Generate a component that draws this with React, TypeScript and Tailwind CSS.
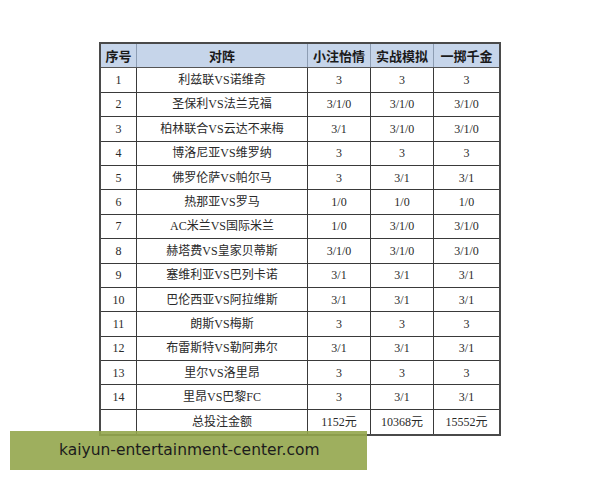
const rows: string[][] = [
  ["1", "利兹联VS诺维奇", "3", "3", "3"],
  ["2", "圣保利VS法兰克福", "3/1/0", "3/1/0", "3/1/0"],
  ["3", "柏林联合VS云达不来梅", "3/1", "3/1/0", "3/1/0"],
  ["4", "博洛尼亚VS维罗纳", "3", "3", "3"],
  ["5", "佛罗伦萨VS帕尔马", "3", "3/1", "3/1"],
  ["6", "热那亚VS罗马", "1/0", "1/0", "1/0"],
  ["7", "AC米兰VS国际米兰", "1/0", "3/1/0", "3/1/0"],
  ["8", "赫塔费VS皇家贝蒂斯", "3/1/0", "3/1/0", "3/1/0"],
  ["9", "塞维利亚VS巴列卡诺", "3/1", "3/1", "3/1"],
  ["10", "巴伦西亚VS阿拉维斯", "3/1", "3/1", "3/1"],
  ["11", "朗斯VS梅斯", "3", "3", "3"],
  ["12", "布雷斯特VS勒阿弗尔", "3/1", "3/1", "3/1"],
  ["13", "里尔VS洛里昂", "3", "3", "3"],
  ["14", "里昂VS巴黎FC", "3", "3/1", "3/1"],
  ["", "总投注金额", "1152元", "10368元", "15552元"],
]

const headers = ["序号", "对阵", "小注怡情", "实战模拟", "一掷千金"]
const widths = ["w-[36px]", "w-[171px]", "w-[63px]", "w-[63px]", "w-[65px]"]

export default function App() {
  return (
    <div className="relative w-[600px] h-[480px] bg-white pt-[42px] pl-[99px]">
      <div className="w-[402px] border-2 border-[#4a4a4a]">
        <div className="flex h-[24.4px] bg-[#c6d5ea] border-b border-[#555]">
          {headers.map((h, i) => (
            <div
              key={h}
              className={`${widths[i]} flex items-center justify-center text-[13px] font-bold text-[#1a1a1a] ${
                i < 4 ? "border-r border-[#8d9db3]" : ""
              }`}
              style={{ fontFamily: '"Noto Sans CJK SC", sans-serif' }}
            >
              {h}
            </div>
          ))}
        </div>
        {rows.map((r, ri) => (
          <div
            key={ri}
            className={`flex h-[24.4px] ${ri < rows.length - 1 ? "border-b border-[#3a3a3a]" : ""}`}
          >
            {r.map((c, ci) => (
              <div
                key={ci}
                className={`${widths[ci]} flex items-center justify-center text-[12px] text-[#2a2a2a] ${
                  ci < 4 ? "border-r border-[#3a3a3a]" : ""
                }`}
                style={{ fontFamily: '"Liberation Serif", "Noto Sans CJK SC", serif' }}
              >
                {c}
              </div>
            ))}
          </div>
        ))}
      </div>
      <div
        className="absolute left-[10px] top-[431px] w-[357px] h-[39px] bg-[#93a64c]/90 flex items-center pl-[49px] text-[15.5px] text-[#1c1c1c]"
        style={{ fontFamily: '"DejaVu Sans", sans-serif' }}
      >
        kaiyun-entertainment-center.com
      </div>
    </div>
  )
}
